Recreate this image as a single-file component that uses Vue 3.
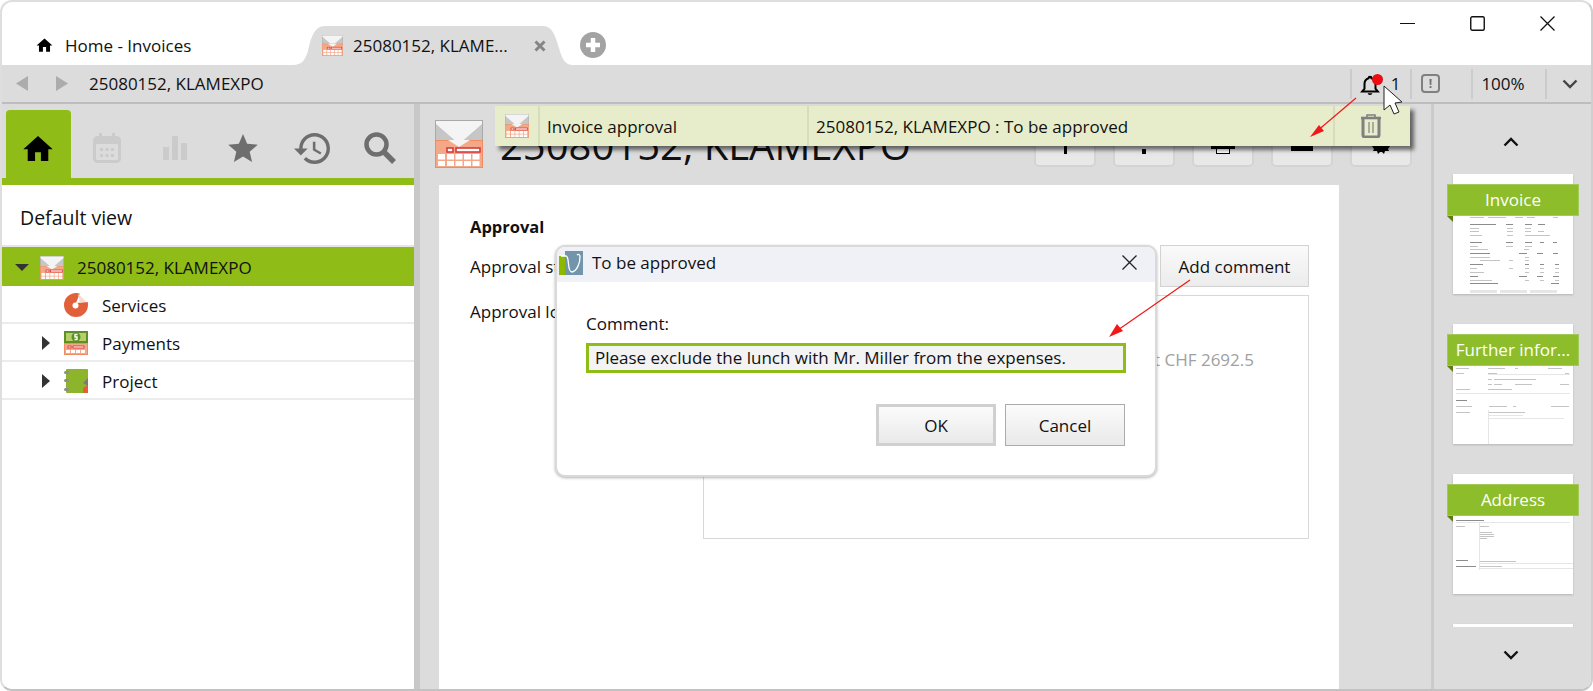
<script setup>
const treeRows = [
  { label: 'Services', icon: 'services', arrow: false },
  { label: 'Payments', icon: 'payments', arrow: true },
  { label: 'Project', icon: 'project', arrow: true },
]

const D = '#8c8c8c'
const M = '#c4c4c4'
const L = '#e6e6e6'

function tableRow(y, cols, color) {
  return cols.map(([x, w]) => ({ x, y, w, h: 1, c: color }))
}

const invoiceBars = [
  ...tableRow(43, [[17, 14], [35, 18], [62, 8], [74, 8], [100, 3], [102, 3]], M),
  ...tableRow(50, [[17, 26], [53, 7], [72, 7], [85, 7]], D),
  ...tableRow(54, [[17, 9], [54, 6], [72, 6]], M),
  ...tableRow(57, [[17, 9], [54, 6], [72, 6], [85, 6]], M),
  ...tableRow(61, [[17, 12], [54, 6], [72, 25]], M),
  ...tableRow(68, [[17, 12], [53, 7], [72, 7], [87, 4], [100, 4]], D),
  ...tableRow(72, [[17, 8], [53, 7], [72, 7]], M),
  ...tableRow(75, [[17, 18], [71, 5]], M),
  ...tableRow(79, [[17, 20], [66, 8], [84, 6], [100, 5]], D),
  ...tableRow(83, [[17, 20], [72, 4]], M),
  ...tableRow(86, [[27, 20], [56, 4], [72, 4]], M),
  ...tableRow(90, [[17, 13], [72, 4], [87, 4], [102, 4]], D),
  ...tableRow(94, [[17, 7], [56, 4], [72, 4], [87, 4], [102, 4]], M),
  ...tableRow(98, [[17, 14], [72, 4], [87, 4], [102, 4]], M),
  ...tableRow(102, [[17, 8], [66, 8], [84, 6], [100, 6]], D),
  ...tableRow(106, [[17, 22], [72, 4], [87, 4], [102, 4]], M),
  ...tableRow(109, [[17, 28], [98, 8]], D),
  { x: 17, y: 116, w: 27, h: 3, c: L },
  { x: 47, y: 116, w: 27, h: 3, c: L },
  { x: 77, y: 116, w: 27, h: 3, c: L },
]

const furtherBars = [
  ...tableRow(44, [[3, 13], [35, 17], [62, 3], [95, 14]], M),
  ...tableRow(49, [[3, 8], [35, 9], [112, 4]], M),
  { x: 35, y: 50, w: 82, h: 1, c: L },
  ...tableRow(55, [[35, 4], [41, 42]], M),
  ...tableRow(60, [[35, 4], [41, 8], [62, 17], [107, 9]], M),
  ...tableRow(65, [[3, 14], [35, 24]], M),
  { x: 3, y: 69, w: 114, h: 1, c: L },
  ...tableRow(76, [[3, 11]], D),
  ...tableRow(82, [[3, 16], [36, 18], [60, 3], [98, 18]], M),
  ...tableRow(88, [[3, 14], [36, 36]], M),
  ...tableRow(91, [[36, 34]], L),
  ...tableRow(94, [[36, 75]], L),
  { x: 35, y: 86, w: 1, h: 34, c: L },
]

const addressBars = [
  ...tableRow(46, [[3, 28]], D),
  { x: 3, y: 48, w: 114, h: 1, c: L },
  ...tableRow(52, [[3, 9], [27, 9]], M),
  ...tableRow(58, [[27, 12]], M),
  ...tableRow(60, [[27, 14]], M),
  ...tableRow(62, [[27, 14]], M),
  ...tableRow(64, [[27, 7]], M),
  { x: 26, y: 48, w: 1, h: 48, c: L },
  ...tableRow(86, [[3, 12]], D),
  ...tableRow(87, [[27, 36]], M),
  ...tableRow(92, [[3, 20]], D),
  ...tableRow(92, [[27, 22]], M),
  { x: 26, y: 89, w: 94, h: 1, c: L },
  { x: 26, y: 94, w: 94, h: 1, c: L },
]

const thumbs = [
  { label: 'Invoice', bars: invoiceBars },
  { label: 'Further infor...', bars: furtherBars },
  { label: 'Address', bars: addressBars },
  { label: '', bars: [] },
]
</script>

<template>
  <div class="page">
    <svg class="sprites" width="0" height="0" aria-hidden="true">
      <symbol id="inv" viewBox="0 0 48 48">
        <rect x="0.5" y="0.5" width="47" height="22" fill="#c6c6c6" stroke="#a9a9a9" />
        <polygon points="1,1 47,1 47,4 24,24 1,4" fill="#f4f4f4" />
        <rect x="0.5" y="20.5" width="47" height="27" fill="#f5a888" stroke="#ef8c62" />
        <polygon points="13,20 35,20 24,27" fill="#f4f4f4" />
        <rect x="12" y="28" width="6" height="4" fill="#fff" stroke="#d63b3b" stroke-width="1.6" />
        <rect x="21" y="28" width="24" height="4" fill="#fff" stroke="#d63b3b" stroke-width="1.6" />
        <g fill="#fff">
          <rect x="3" y="34" width="7" height="5.5" /><rect x="12" y="34" width="7" height="5.5" />
          <rect x="20.5" y="34" width="7" height="5.5" /><rect x="29" y="34" width="7" height="5.5" />
          <rect x="37.5" y="34" width="7" height="5.5" />
          <rect x="3" y="41" width="7" height="5" /><rect x="12" y="41" width="7" height="5" />
          <rect x="20.5" y="41" width="7" height="5" /><rect x="29" y="41" width="7" height="5" />
          <rect x="37.5" y="41" width="7" height="5" />
        </g>
      </symbol>
      <symbol id="services" viewBox="0 0 24 24">
        <circle cx="12" cy="12" r="12" fill="#e1603a" />
        <path d="M12 10 L16 0 L24 0 L24 9 Z" fill="#fff" />
        <path d="M14 1 L22 8 L16 10 Z" fill="#f4dcd0" />
        <circle cx="11.5" cy="12.5" r="3" fill="#fff" />
      </symbol>
      <symbol id="payments" viewBox="0 0 24 24">
        <rect x="0" y="0" width="24" height="12" fill="#5f8f27" />
        <rect x="2" y="2" width="20" height="8" fill="#b4d067" />
        <circle cx="12" cy="6" r="4.5" fill="#5f8f27" />
        <path d="M13.5 3.5 H11 V6 H13 V8.5 H10.5" fill="none" stroke="#fff" stroke-width="1.4" />
        <rect x="0.5" y="12.5" width="23" height="11" fill="#f5a888" stroke="#ef8c62" />
        <g fill="#fff" stroke="#d63b3b" stroke-width="0.9">
          <rect x="4" y="15" width="3" height="2" /><rect x="9" y="15" width="11" height="2" />
        </g>
        <g fill="#fff">
          <rect x="2" y="19" width="4" height="3" /><rect x="7" y="19" width="4" height="3" />
          <rect x="12" y="19" width="4" height="3" /><rect x="17" y="19" width="4" height="3" />
        </g>
      </symbol>
      <symbol id="project" viewBox="0 0 24 24">
        <rect x="2" y="0" width="22" height="24" rx="1" fill="#8cb52c" />
        <rect x="0" y="2" width="5" height="3" rx="1.5" fill="#8e8e8e" />
        <rect x="0" y="10" width="5" height="3" rx="1.5" fill="#8e8e8e" />
        <rect x="0" y="19" width="5" height="3" rx="1.5" fill="#8e8e8e" />
        <path d="M24 9 L19 14 L24 17 Z" fill="#7a7a7a" />
        <path d="M24 16 L19 19 L19 24 L24 24 Z" fill="#e1603a" />
      </symbol>
      <symbol id="home" viewBox="0 0 24 24">
        <path d="M10 20v-6h4v6h5v-8h3L12 3 2 12h3v8z" />
      </symbol>
    </svg>

    <div class="window">
      <header class="titlebar">
        <div class="home-tab">
          <svg class="home-tab-icon"><use href="#home" /></svg>
          <span>Home - Invoices</span>
        </div>
        <div class="doc-tab">
          <svg class="doc-tab-shape" viewBox="0 0 280 39" preserveAspectRatio="none">
            <path d="M0 39 C9 39 12 34 15 25 C18 12 21 0 32 0 L250 0 C260 0 263 12 266 22 C269 33 272 39 280 39 Z" fill="#dcdcdc" />
          </svg>
          <svg class="doc-tab-icon"><use href="#inv" /></svg>
          <span class="doc-tab-text">25080152, KLAME...</span>
          <svg class="doc-tab-close" viewBox="0 0 12 12">
            <path d="M1.5 1.5 L10.5 10.5 M10.5 1.5 L1.5 10.5" stroke="#858585" stroke-width="3" fill="none" />
          </svg>
        </div>
        <svg class="add-tab" viewBox="0 0 26 26">
          <circle cx="13" cy="13" r="13" fill="#a3a3a3" />
          <path d="M13 6 V20 M6 13 H20" stroke="#fff" stroke-width="4.5" />
        </svg>
        <div class="win-controls">
          <svg viewBox="0 0 15 15"><path d="M0 7.5 H15" stroke="#111" stroke-width="1.2" /></svg>
          <svg viewBox="0 0 15 15"><rect x="0.75" y="0.75" width="13.5" height="13.5" rx="1.5" fill="none" stroke="#111" stroke-width="1.4" /></svg>
          <svg viewBox="0 0 15 15"><path d="M0.5 0.5 L14.5 14.5 M14.5 0.5 L0.5 14.5" stroke="#111" stroke-width="1.3" /></svg>
        </div>
      </header>

      <div class="toolbar">
        <svg class="nav-arrow" viewBox="0 0 12 15"><path d="M12 0 V15 L0 7.5 Z" /></svg>
        <svg class="nav-arrow" viewBox="0 0 12 15"><path d="M0 0 V15 L12 7.5 Z" /></svg>
        <span class="crumb">25080152, KLAMEXPO</span>
        <div class="tool-cells">
          <div class="tool-cell cell-bell">
            <svg class="bell" viewBox="0 0 24 24">
              <path d="M12 3 a1.6 1.6 0 0 1 1.6 1.6 C17 5.6 18 8.5 18 11 V16 L20.5 19 H3.5 L6 16 V11 C6 8.5 7 5.6 10.4 4.6 A1.6 1.6 0 0 1 12 3 Z" fill="none" stroke="#000" stroke-width="2.2" />
              <path d="M9.5 21 H14.5 A2.5 2 0 0 1 9.5 21 Z" />
            </svg>
            <span class="bell-dot"></span>
            <span class="bell-count">1</span>
          </div>
          <div class="tool-cell cell-warn">
            <span class="warn">!</span>
          </div>
          <div class="tool-cell cell-zoom">100%</div>
          <div class="tool-cell cell-more">
            <svg class="more" viewBox="0 0 16 10"><path d="M1.5 1.5 L8 8 L14.5 1.5" fill="none" stroke="#444" stroke-width="2.4" /></svg>
          </div>
        </div>
      </div>

      <main class="main">
        <aside class="left">
          <nav class="side-tabs">
            <div class="side-tab active">
              <svg class="st-home" viewBox="2 3 20 17"><path d="M10 20v-6h4v6h5v-8h3L12 3 2 12h3v8z" /></svg>
            </div>
            <div class="side-tab">
              <svg class="st-cal" viewBox="0 0 28 30">
                <rect x="1.5" y="4.5" width="25" height="24" rx="3" fill="none" stroke="#cbcbcb" stroke-width="3" />
                <rect x="2" y="5" width="24" height="6" fill="#cbcbcb" />
                <rect x="6" y="0" width="3" height="6" fill="#cbcbcb" /><rect x="19" y="0" width="3" height="6" fill="#cbcbcb" />
                <g fill="#cbcbcb">
                  <rect x="7" y="15" width="3" height="3" /><rect x="12.5" y="15" width="3" height="3" /><rect x="18" y="15" width="3" height="3" />
                  <rect x="7" y="21" width="3" height="3" /><rect x="12.5" y="21" width="3" height="3" /><rect x="18" y="21" width="3" height="3" />
                </g>
              </svg>
            </div>
            <div class="side-tab">
              <svg class="st-bars" viewBox="0 0 24 24" fill="#cbcbcb">
                <rect x="0" y="11" width="6" height="13" /><rect x="9" y="0" width="6" height="24" /><rect x="18" y="7" width="6" height="17" />
              </svg>
            </div>
            <div class="side-tab">
              <svg class="st-star" viewBox="2 2 20 19"><path d="M12 17.27L18.18 21l-1.64-7.03L22 9.24l-7.19-.61L12 2 9.19 8.63 2 9.24l5.46 4.73L5.82 21z" /></svg>
            </div>
            <div class="side-tab">
              <svg class="st-hist" viewBox="1 3 21 18"><path d="M13 3a9 9 0 0 0-9 9H1l3.89 3.89.07.14L9 12H6c0-3.87 3.13-7 7-7s7 3.13 7 7-3.13 7-7 7c-1.93 0-3.68-.79-4.94-2.06l-1.42 1.42A8.954 8.954 0 0 0 13 21a9 9 0 0 0 0-18zm-1 5v5l4.28 2.54.72-1.21-3.5-2.08V8H12z" /></svg>
            </div>
            <div class="side-tab">
              <svg class="st-search" viewBox="0 0 32 32">
                <circle cx="12.5" cy="12.5" r="10" fill="none" stroke="#6e6e6e" stroke-width="4.5" />
                <path d="M20 20 L30 30" stroke="#6e6e6e" stroke-width="5.5" />
              </svg>
            </div>
          </nav>
          <div class="default-view">Default view</div>
          <div class="tree">
            <div class="tree-row root">
              <span class="slot"><svg class="arrow-down" viewBox="0 0 14 7"><path d="M0 0 H14 L7 7 Z" /></svg></span>
              <svg class="tree-icon"><use href="#inv" /></svg>
              <span>25080152, KLAMEXPO</span>
            </div>
            <div v-for="row in treeRows" :key="row.label" class="tree-row child">
              <span class="slot">
                <svg v-if="row.arrow" class="arrow-right" viewBox="0 0 8 14"><path d="M0 0 V14 L8 7 Z" /></svg>
              </span>
              <svg class="tree-icon"><use :href="'#' + row.icon" /></svg>
              <span>{{ row.label }}</span>
            </div>
          </div>
        </aside>

        <div class="splitter"></div>

        <section class="center">
          <div class="head">
            <svg class="head-icon"><use href="#inv" /></svg>
            <h1 class="head-title">25080152, KLAMEXPO</h1>
            <div class="head-tools">
              <button class="tool"><i class="g-line"></i></button>
              <button class="tool"><i class="g-dot"></i></button>
              <button class="tool">
                <svg class="g-box" viewBox="0 0 24 9">
                  <rect x="0" y="0" width="24" height="4" />
                  <rect x="5.5" y="3.5" width="13" height="5" fill="#fff" stroke="#000" />
                </svg>
              </button>
              <button class="tool"><i class="g-bar"></i></button>
              <button class="tool">
                <svg class="g-gear" viewBox="0 0 18 8"><path d="M0 0 H18 L16 3 L17 5 L13 5 L12 8 L10 6 L8 6 L6 8 L5 5 L1 5 L2 3 Z" /></svg>
              </button>
            </div>
          </div>
          <div class="doc">
            <div class="doc-heading">Approval</div>
            <div class="form-row status">
              <span>Approval status</span>
              <button class="add-comment">Add comment</button>
            </div>
            <div class="form-row log">
              <span class="log-label">Approval log</span>
              <div class="log-box">
                <div>2025-08-14 14:38:27 (SYS) Invoiced</div>
                <div>2025-08-14 14:38:27 (SYS) Verified</div>
                <div class="log-last">To be approved (Total amount CHF 2692.5</div>
              </div>
            </div>
          </div>
        </section>

        <div class="splitter-thin"></div>

        <aside class="right">
          <div class="chev-top">
            <svg class="chev" viewBox="0 0 16 10"><path d="M1.5 8.5 L8 2 L14.5 8.5" fill="none" stroke="#111" stroke-width="2.4" /></svg>
          </div>
          <div class="thumb-list">
            <div v-for="(t, i) in thumbs" :key="i" class="thumb">
              <svg class="mini" viewBox="0 0 120 120">
                <rect v-for="(b, j) in t.bars" :key="j" :x="b.x" :y="b.y" :width="b.w" :height="b.h" :fill="b.c" />
              </svg>
              <template v-if="t.label">
                <div class="thumb-label">{{ t.label }}</div>
                <div class="thumb-fold"></div>
              </template>
            </div>
          </div>
          <div class="chev-bottom">
            <svg class="chev" viewBox="0 0 16 10"><path d="M1.5 1.5 L8 8 L14.5 1.5" fill="none" stroke="#111" stroke-width="2.4" /></svg>
          </div>
        </aside>
      </main>
    </div>

    <div class="notice">
      <div class="notice-cell n-icon"><svg><use href="#inv" /></svg></div>
      <div class="notice-cell n-type">Invoice approval</div>
      <div class="notice-cell n-msg">25080152, KLAMEXPO : To be approved</div>
      <div class="notice-cell n-del">
        <svg viewBox="0 0 22 24">
          <path d="M1 4 H21" stroke="#808080" stroke-width="2.6" />
          <path d="M7 3 V1 H15 V3" fill="none" stroke="#808080" stroke-width="1.6" />
          <path d="M3 5 V21 A2 2 0 0 0 5 23 H17 A2 2 0 0 0 19 21 V5" fill="none" stroke="#808080" stroke-width="3" />
          <path d="M9 8 V19 M13 8 V19" stroke="#808080" stroke-width="1.2" />
        </svg>
      </div>
    </div>

    <div class="dialog">
      <div class="dlg-title">
        <svg class="dlg-logo" viewBox="0 0 24 24">
          <rect width="24" height="24" fill="#7295ac" />
          <rect x="0" y="5" width="6" height="19" fill="#8cb800" />
          <rect x="0" y="0" width="6" height="5" fill="#f0f1f6" />
          <path d="M2 5 H7 C9 5 9 9 9.5 13 C10 19 11 21 13 21 C18 20 21 12 21 6 C21 3 19 3 18 4" fill="none" stroke="#fff" stroke-width="1.3" />
        </svg>
        <span class="dlg-title-text">To be approved</span>
        <svg class="dlg-close" viewBox="0 0 15 15"><path d="M0.5 0.5 L14.5 14.5 M14.5 0.5 L0.5 14.5" stroke="#222" stroke-width="1.3" /></svg>
      </div>
      <div class="dlg-body">
        <div class="dlg-label">Comment:</div>
        <div class="dlg-input">Please exclude the lunch with Mr. Miller from the expenses.</div>
        <div class="dlg-buttons">
          <button class="dlg-btn primary">OK</button>
          <button class="dlg-btn">Cancel</button>
        </div>
      </div>
    </div>

    <svg class="annot" viewBox="0 0 1593 691">
      <path d="M1356 98 L1316 132" stroke="#f01818" stroke-width="1.2" />
      <polygon points="1310,137 1319,125 1324,131" fill="#f01818" />
      <path d="M1190 280 L1115 332" stroke="#f01818" stroke-width="1.2" />
      <polygon points="1109,337 1117,324 1123,331" fill="#f01818" />
      <path d="M1384 86 L1384 110 L1390 105 L1394 114 L1399 112 L1395 103 L1402 102 Z" fill="#fff" stroke="#222" stroke-width="1" />
    </svg>
  </div>
</template>

<style>
html, body { margin: 0; background: #fff; }
</style>

<style scoped>
.page {
  position: relative;
  width: 1593px;
  height: 691px;
  overflow: hidden;
  font-family: "Open Sans", "Noto Sans", sans-serif;
  font-size: 17px;
  color: #111;
}
.sprites { position: absolute; }
button { font-family: inherit; font-size: 17px; color: #111; padding: 0; }

.window {
  box-sizing: border-box;
  width: 1593px;
  height: 691px;
  display: flex;
  flex-direction: column;
  background: #fff;
  border: 2px solid #dedede;
  border-bottom-color: #c2c2c2;
  border-right-color: #cfcfcf;
  border-radius: 12px;
  overflow: hidden;
}

/* title bar */
.titlebar {
  height: 63px;
  flex: none;
  display: flex;
  align-items: flex-end;
  padding-right: 36px;
}
.home-tab {
  width: 291px;
  height: 39px;
  box-sizing: border-box;
  padding-left: 33px;
  display: flex;
  align-items: center;
  gap: 11px;
  white-space: nowrap;
}
.home-tab-icon { width: 19px; height: 19px; }
.doc-tab {
  position: relative;
  width: 280px;
  height: 39px;
  display: flex;
  align-items: center;
  box-sizing: border-box;
  padding-left: 29px;
}
.doc-tab-shape { position: absolute; inset: 0; width: 100%; height: 100%; }
.doc-tab-icon { position: relative; width: 21px; height: 21px; margin-right: 10px; }
.doc-tab-text { position: relative; width: 181px; white-space: nowrap; }
.doc-tab-close { position: relative; width: 12px; height: 12px; }
.add-tab { width: 26px; height: 26px; margin: 0 0 7px 7px; }
.win-controls {
  margin-left: auto;
  align-self: flex-start;
  margin-top: 14px;
  display: flex;
  gap: 55px;
}
.win-controls svg { width: 15px; height: 15px; display: block; }

/* toolbar */
.toolbar {
  height: 39px;
  flex: none;
  box-sizing: border-box;
  background: #dcdcdc;
  border-bottom: 2px solid #bdbdbd;
  display: flex;
  align-items: center;
  padding-left: 14px;
}
.nav-arrow { width: 12px; height: 15px; fill: #acacac; margin-right: 28px; }
.crumb { margin-left: -7px; }
.tool-cells { margin-left: auto; display: flex; height: 30px; }
.tool-cell {
  box-sizing: border-box;
  border-left: 2px solid #cbcbcb;
  display: flex;
  align-items: center;
  justify-content: center;
}
.cell-bell { position: relative; width: 60px; }
.bell { position: absolute; left: 7px; top: 5px; width: 22px; height: 22px; }
.bell-dot {
  position: absolute;
  left: 20px;
  top: 5px;
  width: 11px;
  height: 11px;
  border-radius: 50%;
  background: #ee0b13;
}
.bell-count { margin-left: 29px; }
.cell-warn { width: 61px; justify-content: flex-start; padding-left: 9px; }
.warn {
  box-sizing: border-box;
  width: 19px;
  height: 19px;
  border: 2px solid #808080;
  border-radius: 4px;
  font-size: 12px;
  font-weight: 700;
  line-height: 15px;
  text-align: center;
  color: #707070;
}
.cell-zoom { width: 74px; padding-right: 12px; }
.cell-more { width: 46px; justify-content: flex-start; padding-left: 15px; }
.more { width: 16px; height: 10px; }

/* main */
.main { flex: 1; min-height: 0; display: flex; }
.left { width: 412px; flex: none; background: #fff; display: flex; flex-direction: column; }
.side-tabs {
  height: 81px;
  box-sizing: border-box;
  flex: none;
  padding: 6px 0 0 2px;
  display: grid;
  grid-template-columns: repeat(6, 68.5px);
  background: #dcdcdc;
  border-bottom: 7px solid #8fbc17;
}
.side-tab { display: flex; align-items: center; justify-content: center; padding-top: 8px; }
.side-tab.active { margin: 0 1.75px; background: #8fbc17; border-radius: 4px 4px 0 0; }
.st-home { width: 30px; height: 25px; }
.st-cal { width: 28px; height: 30px; }
.st-bars { width: 24px; height: 24px; }
.st-star { width: 30px; height: 28px; fill: #6e6e6e; margin-right: 2px; }
.st-hist { width: 36px; height: 31px; fill: #6e6e6e; }
.st-search { width: 32px; height: 32px; margin-right: 2px; }
.default-view {
  height: 60px;
  box-sizing: border-box;
  padding: 5px 0 0 18px;
  display: flex;
  align-items: center;
  font-size: 19.5px;
  flex: none;
}
.tree { border-top: 2px solid #e6e6e6; }
.tree-row { display: flex; align-items: center; box-sizing: border-box; }
.tree-row.root { height: 39px; padding: 2px 0 0 13px; background: #8fbc17; }
.tree-row.root span:last-child { margin-left: -1px; }
.tree-row.child { height: 38px; padding: 2px 0 0 37px; border-bottom: 2px solid #ececec; }
.slot { width: 25px; flex: none; display: flex; align-items: center; }
.arrow-down { width: 14px; height: 7px; fill: #333; }
.arrow-right { width: 8px; height: 14px; margin-left: 3px; fill: #333; }
.tree-icon { width: 24px; height: 24px; flex: none; margin-right: 14px; }

.splitter { width: 6px; flex: none; background: #c8c8c8; }
.splitter-thin { width: 3px; flex: none; background: #cbcbcb; }

/* centre */
.center { width: 1011px; flex: none; background: #dcdcdc; display: flex; flex-direction: column; }
.head {
  height: 81px;
  flex: none;
  box-sizing: border-box;
  padding: 16px 19px 0 15px;
  display: flex;
  align-items: flex-start;
}
.head-icon { width: 48px; height: 48px; flex: none; }
.head-title {
  margin: 1px 0 0 17px;
  font-size: 40px;
  line-height: 48px;
  font-weight: 400;
  color: #111;
  white-space: nowrap;
}
.head-tools { margin-left: auto; margin-top: 5px; display: flex; gap: 17px; }
.tool {
  box-sizing: border-box;
  width: 62px;
  height: 42px;
  background: #e8e8e8;
  border: 2px solid #d4d4d4;
  border-radius: 5px;
  display: flex;
  justify-content: center;
  align-items: flex-end;
  padding-bottom: 11px;
}
.g-line { display: block; width: 3px; height: 16px; background: #000; }
.g-dot {
  display: block;
  width: 4px;
  height: 10px;
  background: linear-gradient(#000 2px, transparent 2px, transparent 5px, #000 5px);
}
.g-box { width: 24px; height: 9px; }
.g-bar { display: block; width: 22px; height: 5px; background: #000; margin-bottom: 3px; }
.g-gear { width: 18px; height: 8px; }

.doc {
  flex: 1;
  margin-left: 19px;
  width: 900px;
  background: #fff;
  box-sizing: border-box;
  padding: 31px 30px 0 31px;
}
.doc-heading { font-weight: 700; font-size: 16.5px; line-height: 22px; }
.form-row { display: flex; }
.status { height: 42px; margin-top: 7px; align-items: center; justify-content: space-between; }
.add-comment {
  width: 149px;
  height: 42px;
  background: linear-gradient(#fafafa, #ececec);
  border: 1px solid #d2d2d2;
}
.log { margin-top: 8px; }
.log-label { padding-top: 5px; }
.log-box {
  box-sizing: border-box;
  margin-left: auto;
  width: 606px;
  height: 244px;
  border: 1px solid #d8d8d8;
  padding: 9px 0 0 12px;
  line-height: 22px;
  color: #a0a0a0;
  white-space: nowrap;
}
.log-last { text-align: right; padding-right: 54px; }

/* thumbnails */
.right { flex: 1; min-width: 0; background: #dcdcdc; display: flex; flex-direction: column; padding-left: 19px; }
.chev-top { height: 70px; flex: none; display: flex; align-items: center; padding: 5px 0 0 50px; box-sizing: border-box; }
.chev { width: 16px; height: 10px; }
.thumb-list {
  height: 453px;
  flex: none;
  margin-left: -6px;
  padding-left: 6px;
  display: flex;
  flex-direction: column;
  gap: 30px;
  overflow: hidden;
}
.thumb {
  position: relative;
  flex: none;
  width: 120px;
  height: 120px;
  background: #fff;
  box-shadow: 0 1px 2px rgba(0, 0, 0, .18);
}
.mini { display: block; width: 120px; height: 120px; }
.thumb-label {
  position: absolute;
  left: -6px;
  top: 10px;
  box-sizing: border-box;
  width: 132px;
  height: 32px;
  background: #8dbd2b;
  border: 1px solid #a3c95a;
  color: #fff;
  font-size: 17px;
  line-height: 29px;
  text-align: center;
  white-space: nowrap;
}
.thumb-fold {
  position: absolute;
  left: -6px;
  top: 42px;
  width: 0;
  height: 0;
  border-top: 6px solid #5f7d12;
  border-left: 6px solid transparent;
}
.chev-bottom { flex: 1; display: flex; align-items: center; padding: 0 0 6px 50px; }

/* notification */
.notice {
  position: absolute;
  left: 495px;
  top: 106px;
  width: 915px;
  height: 40px;
  display: grid;
  grid-template-columns: 45px 269px 526px 75px;
  background: #e7edcb;
  box-shadow: 4px 4px 4px rgba(0, 0, 0, .55);
}
.notice-cell { display: flex; align-items: center; border-right: 2px solid #d6dcbd; white-space: nowrap; }
.notice-cell:last-child { border-right: 0; }
.n-icon { justify-content: flex-end; padding-right: 9px; }
.n-icon svg { width: 24px; height: 24px; }
.n-type, .n-msg { padding-left: 7px; }
.n-del { padding-left: 25px; }
.n-del svg { width: 22px; height: 24px; }

/* dialog */
.dialog {
  position: absolute;
  left: 555px;
  top: 245px;
  box-sizing: border-box;
  width: 602px;
  height: 232px;
  background: #fff;
  border: 2px solid #d9d9d9;
  border-radius: 10px;
  box-shadow: 0 1px 3px rgba(0, 0, 0, .3);
  overflow: hidden;
}
.dlg-title {
  height: 35px;
  box-sizing: border-box;
  background: #f0f1f6;
  display: flex;
  align-items: center;
  padding: 0 18px 4px 2px;
}
.dlg-logo { width: 24px; height: 24px; flex: none; }
.dlg-title-text { margin-left: 9px; }
.dlg-close { width: 15px; height: 15px; margin-left: auto; }
.dlg-body { padding: 31px 29px 0; }
.dlg-label { line-height: 22px; }
.dlg-input {
  box-sizing: border-box;
  margin-top: 8px;
  height: 30px;
  border: 3px solid #8fbc17;
  background: #f3f3f3;
  padding-left: 6px;
  line-height: 23px;
  white-space: nowrap;
}
.dlg-buttons { margin: 31px 1px 0 0; display: flex; justify-content: flex-end; gap: 9px; }
.dlg-btn {
  box-sizing: border-box;
  width: 120px;
  height: 42px;
  background: linear-gradient(#fbfbfb, #e9e9e9);
  border: 1px solid #ababab;
}
.dlg-btn.primary { border: 3px solid #d0d0d0; }

.annot { position: absolute; left: 0; top: 0; width: 1593px; height: 691px; pointer-events: none; }
</style>
